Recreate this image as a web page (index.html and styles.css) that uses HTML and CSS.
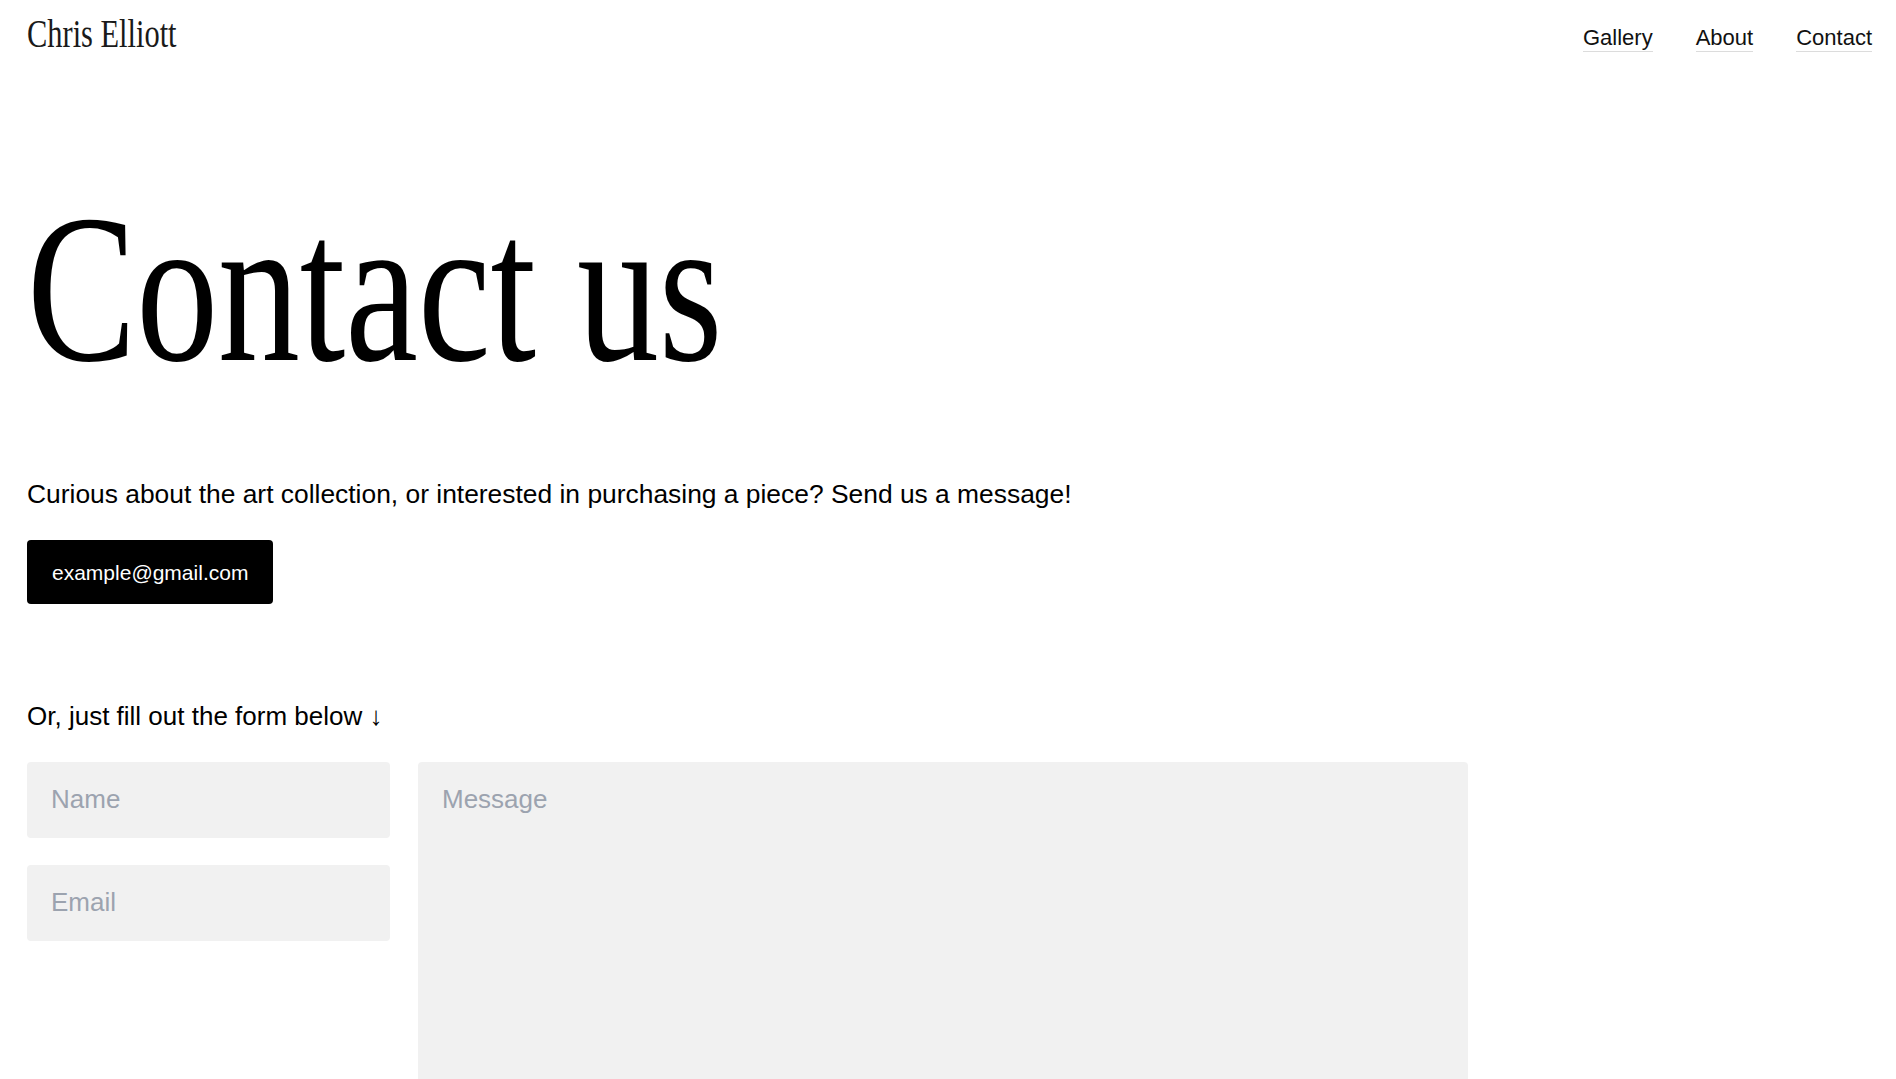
FILE: index.html
```html
<!DOCTYPE html>
<html lang="en">
<head>
<meta charset="utf-8">
<title>Contact us — Chris Elliott</title>
<link rel="stylesheet" href="styles.css">
</head>
<body>
<header class="site-header">
  <a class="logo" href="#"><span class="logo-text">Chris Elliott</span></a>
  <nav class="nav">
    <a class="nav-link" href="#">Gallery</a>
    <a class="nav-link" href="#">About</a>
    <a class="nav-link" href="#">Contact</a>
  </nav>
</header>
<main class="main">
  <h1 class="title">Contact us</h1>
  <p class="lead">Curious about the art collection, or interested in purchasing a piece? Send us a message!</p>
  <a class="email-btn" href="#">example@gmail.com</a>
  <p class="form-intro">Or, just fill out the form below ↓</p>
  <form class="contact-form">
    <div class="form-col">
      <input class="field" type="text" placeholder="Name">
      <input class="field" type="email" placeholder="Email">
    </div>
    <textarea class="field field-message" placeholder="Message"></textarea>
  </form>
</main>
</body>
</html>
```

FILE: styles.css
```css
* { box-sizing: border-box; }

html, body {
  margin: 0;
  padding: 0;
  background: #ffffff;
  color: #000;
  font-family: "Liberation Sans", Arial, sans-serif;
}

.site-header {
  display: flex;
  justify-content: space-between;
  align-items: flex-start;
  padding: 14px 24px 0 27px;
}

.logo {
  color: #1a1a1a;
  text-decoration: none;
  font-family: "Liberation Serif", "Times New Roman", serif;
  font-size: 39px;
  line-height: 39px;
}

.logo-text {
  display: inline-block;
  transform: scaleX(0.78);
  transform-origin: left center;
}

.nav {
  display: flex;
  gap: 43px;
  margin-top: 11px;
}

.nav-link {
  color: #111;
  text-decoration: none;
  font-size: 22px;
  line-height: 25px;
  padding-bottom: 1px;
  border-bottom: 1px solid #dcdcdc;
}

.main {
  padding: 0 24px 0 27px;
}

.title {
  margin: 131px 0 0;
  font-family: "Liberation Serif", "Times New Roman", serif;
  font-weight: 400;
  font-size: 212px;
  line-height: 210px;
  letter-spacing: 0;
  transform: scaleX(0.772);
  transform-origin: left center;
  white-space: nowrap;
}

.lead {
  margin: 81px 0 0;
  font-size: 26.4px;
  line-height: 39px;
  color: #000;
}

.email-btn {
  display: inline-block;
  margin-top: 26px;
  background: #000;
  color: #fff;
  text-decoration: none;
  font-size: 21px;
  line-height: 23px;
  padding: 21px 25px 20px;
  border-radius: 4px;
}

.form-intro {
  margin: 93px 0 0;
  font-size: 26px;
  line-height: 39px;
}

.contact-form {
  display: flex;
  gap: 28px;
  margin-top: 26px;
}

.form-col {
  display: flex;
  flex-direction: column;
  gap: 27px;
  width: 363px;
}

.field {
  display: block;
  border: 0;
  outline: 0;
  background: #f1f1f1;
  border-radius: 4px;
  font-family: "Liberation Sans", Arial, sans-serif;
  font-size: 26px;
  line-height: 31px;
  color: #111;
  padding: 22px 24px 23px;
  margin: 0;
}

.form-col .field {
  width: 363px;
  height: 76px;
}

.field::placeholder {
  color: #9ca3af;
  opacity: 1;
}

.field-message {
  width: 1050px;
  height: 440px;
  resize: none;
}
```
